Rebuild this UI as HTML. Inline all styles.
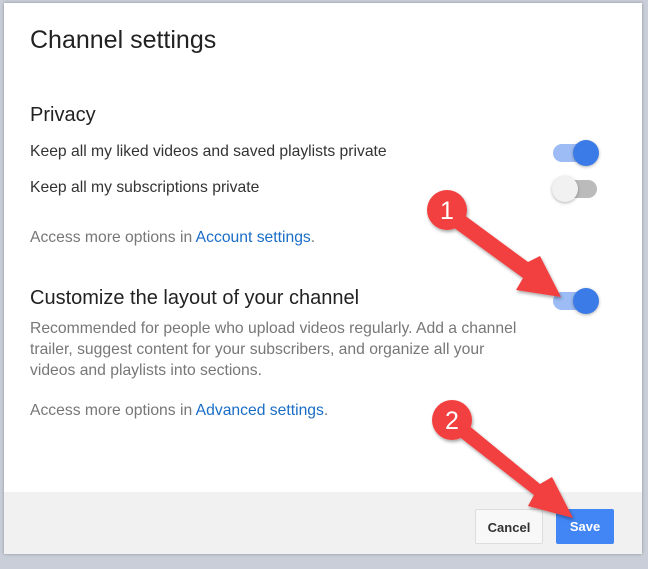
<!DOCTYPE html>
<html><head><style>
*{margin:0;padding:0;box-sizing:border-box}
body{width:648px;height:569px;overflow:hidden;background:#c9ced8;font-family:"Liberation Sans",Arial,sans-serif;position:relative}
.dlg{position:absolute;left:4px;top:3px;width:638px;height:551px;background:#fff;box-shadow:0 0 3px rgba(0,0,0,.3)}
.foot{position:absolute;left:0;right:0;bottom:0;height:62px;background:#f1f1f1}
.t{position:absolute;white-space:nowrap}
.h1{font-size:25px;color:#222;left:26px;top:23px}
.h2{font-size:20px;color:#222}
.p{font-size:15.7px;color:#333}
.g{font-size:15.7px;color:#777;line-height:21px}
a{color:#1a6dc6;text-decoration:none}
.tg{position:absolute;width:46px;height:26px}
.tg .tr{position:absolute;left:1px;top:4px;width:44px;height:18px;border-radius:9px}
.tg .k{position:absolute;top:0;width:26px;height:26px;border-radius:50%;box-shadow:0 1px 3px rgba(0,0,0,.3)}
.btn{position:absolute;top:509px;height:35px;border-radius:2px;font-size:13px;font-weight:bold;text-align:center;line-height:35px}
</style></head><body>
<div class="dlg">
<div class="t h1">Channel settings</div>
<div class="t h2" style="left:26px;top:101px">Privacy</div>
<div class="t p" style="left:26px;top:140px">Keep all my liked videos and saved playlists private</div>
<div class="t p" style="left:26px;top:176px">Keep all my subscriptions private</div>
<div class="t g" style="left:26px;top:224px">Access more options in <a>Account settings</a>.</div>
<div class="t h2" style="left:26px;top:284px">Customize the layout of your channel</div>
<div class="t g" style="left:26px;top:315px">Recommended for people who upload videos regularly. Add a channel<br>trailer, suggest content for your subscribers, and organize all your<br>videos and playlists into sections.</div>
<div class="t g" style="left:26px;top:397px">Access more options in <a>Advanced settings</a>.</div>
<div class="foot"></div>
</div>
<div class="tg" style="left:552px;top:140px"><div class="tr" style="background:#9dbcf5"></div><div class="k" style="left:21px;background:#3b7be8"></div></div>
<div class="tg" style="left:552px;top:176px"><div class="tr" style="background:#bbb"></div><div class="k" style="left:0;background:#f1f1f1"></div></div>
<div class="tg" style="left:552px;top:288px"><div class="tr" style="background:#9dbcf5"></div><div class="k" style="left:21px;background:#3b7be8"></div></div>
<div class="btn" style="left:475px;width:68px;background:#f8f8f8;border:1px solid #ddd;color:#333">Cancel</div>
<div class="btn" style="left:556px;width:58px;background:#4285f4;color:#fff">Save</div>
<svg width="648" height="569" style="position:absolute;left:0;top:0">
<defs><filter id="s"><feDropShadow dx="1" dy="2" stdDeviation="1.5" flood-opacity=".35"/></filter></defs>
<g fill="#f23f3f" filter="url(#s)">
<path d="M452 206 L528 262 L540 256 L561 297 L516 290 L523 278 L446 222 Z"/>
<circle cx="447" cy="210" r="20"/>
<path d="M456 415 L540 484 L552 477 L573 518 L528 506 L534 495 L448 428 Z"/>
<circle cx="452" cy="420" r="20"/>
</g>
<text x="447" y="219" fill="#fff" font-size="25" text-anchor="middle" font-family="Liberation Sans">1</text>
<text x="452" y="429" fill="#fff" font-size="25" text-anchor="middle" font-family="Liberation Sans">2</text>
</svg>
</body></html>
